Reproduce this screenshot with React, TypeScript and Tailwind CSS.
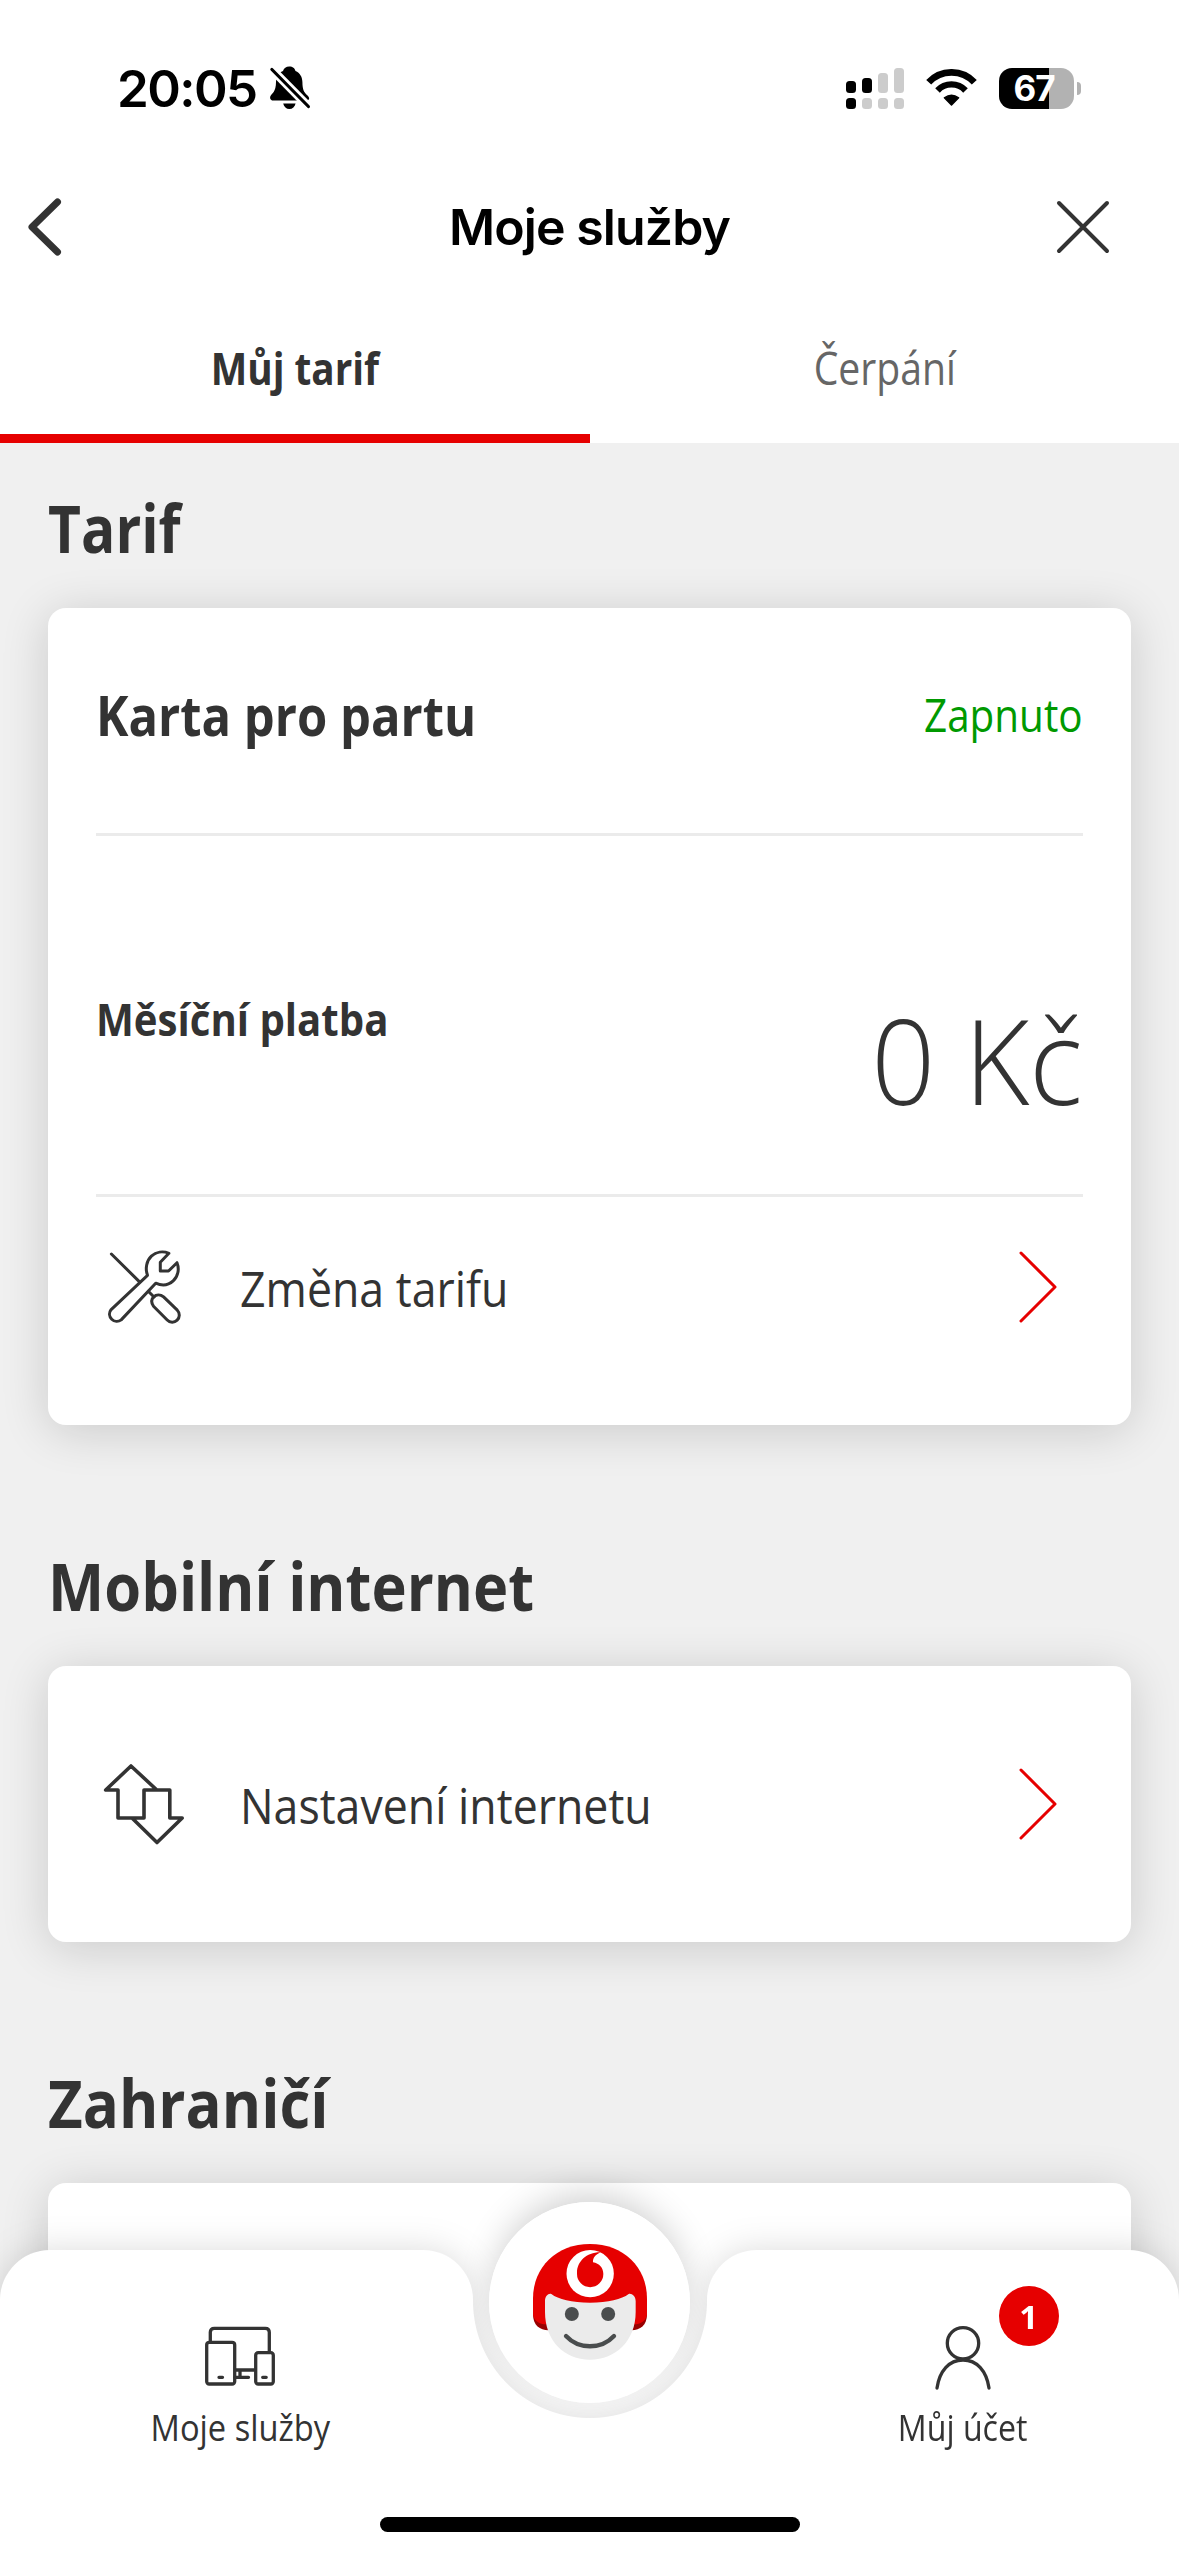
import { ReactNode } from 'react'
import { clsx } from 'clsx'

const signalBars = [
  { height: 'h-[12px]', top: true, bottom: true },
  { height: 'h-[15px]', top: true, bottom: false },
  { height: 'h-[20px]', top: false, bottom: false },
  { height: 'h-[25px]', top: false, bottom: false },
]

const BellOffIcon = () => (
  <svg width="42" height="44" viewBox="0 0 42 44" fill="none">
    <path
      d="M20.2.5C24 .5 25.5 2 26.5 5C31 7 33.4 11 33.4 16C33.5 24 35 26 38 29C40 31 40.5 32 40 33C39.5 34.3 38.5 34.5 37 34.5H4C1.5 34.5.5 32 1.5 30C3 27 7 26 7 16C7 11 9.5 7 14 5C15 2 17 .5 20.2.5Z"
      fill="black"
    />
    <path d="M14.2 37.5H26.6C25.8 41 23.5 43 20.4 43S15 41 14.2 37.5Z" fill="black" />
    <path d="M-1 -.5L43.3 44.4" stroke="white" strokeWidth="8.5" />
    <path d="M2.9 3.5L39.4 40.5" stroke="black" strokeWidth="3.2" strokeLinecap="round" />
  </svg>
)

const WifiIcon = () => (
  <svg width="51" height="38" viewBox="0 0 51 38" fill="none" stroke="black">
    <path d="M2.7 13.3A31.2 31.2 0 0 1 48.3 13.3" strokeWidth="6.8" />
    <path d="M11.5 21.5A19.2 19.2 0 0 1 39.5 21.5" strokeWidth="6.3" />
    <path
      d="M25.5 36L18.4 28.8Q25.5 23.8 32.6 28.8Z"
      fill="black"
      strokeWidth="1.5"
      strokeLinejoin="round"
    />
  </svg>
)

const ToolsIcon = () => (
  <svg width="96" height="96" viewBox="0 0 96 96" fill="none" stroke="#333" strokeWidth="3" strokeLinecap="round" strokeLinejoin="round">
    <path d="M15.4 15L43.3 42.6M52.8 52.7L58 58" />
    <path d="M72.9 14.3L64.3 23.2V32H72.5L81 23.7C83.6 30 82 37.5 77.2 41.9C72.4 46.3 65.6 46.8 59.7 44.2L25.2 80.9A7.3 7.3 0 0 1 14.9 70.8L51.5 36.3C49 29.5 50.5 21.8 55.4 17.2C60.2 12.8 67 11.8 72.9 14.3Z" />
    <path d="M67.6 57.9L81.3 71.2A7 7 0 0 1 71.2 81L57.5 67.3C55 63.5 55 60.5 57.7 57.9C60.3 55.2 64.5 55.2 67.6 57.9Z" />
  </svg>
)

const DataArrowsIcon = () => (
  <svg width="96" height="96" viewBox="0 0 96 96" fill="none" stroke="#333" strokeWidth="3.6" strokeLinejoin="round">
    <path d="M60.3 33.5L35 10L9.7 34H22V62H48V34H73.8V62H86.2L61 86.5L36.5 62.5" />
  </svg>
)

const ArrowRight = () => (
  <svg width="96" height="96" viewBox="0 0 96 96" fill="none" stroke="#e60000" strokeWidth="3" strokeLinecap="round" strokeLinejoin="round">
    <path d="M34 14L68 48L34 82" />
  </svg>
)

const DevicesIcon = () => (
  <svg width="72" height="72" viewBox="0 0 72 72" fill="none" stroke="#333" strokeWidth="3.3" strokeLinecap="round">
    <path d="M6.3 21V12.3Q6.3 8.3 10.3 8.3H61.3Q65.3 8.3 65.3 12.3V31.7M32 50H51M36 50V57.3M31 57.3H44.5" />
    <rect x="2.7" y="22.3" width="28" height="41.7" rx="2.5" />
    <rect x="51.7" y="32.7" width="17.6" height="31.3" rx="2.5" />
    <path d="M15 57.3H18.5M58.7 57.3H62.2" />
  </svg>
)

const UserIcon = () => (
  <svg width="72" height="72" viewBox="0 0 72 72" fill="none" stroke="#333" strokeWidth="3.3" strokeLinecap="round">
    <circle cx="36" cy="23.3" r="15.7" />
    <path d="M10 68C12.5 51 22 40 36 40S59.5 51 62 68" />
  </svg>
)

// Assistant face with the red helmet
const Mascot = () => (
  <svg width="114" height="116" viewBox="279 251 342 348" fill="none">
    <path d="M279 462C279 495 300 510 325 510H575C600 510 621 495 621 462Z" fill="#990000" />
    <path
      d="M279 464V415C279 320 350 251 450 251S621 320 621 415V464C616 483 602 492 582 492H318C298 492 284 483 279 464Z"
      fill="#e60000"
    />
    <path
      d="M315 422C315 408 325 398 334 401C355 417 395 427 450 427S545 417 566 401C575 398 587 408 587 422V455C587 540 528 598 450 598S315 540 315 455Z"
      fill="#ebebeb"
    />
    <circle cx="450.5" cy="340" r="71" fill="white" />
    <path
      d="M411 337C411 304 440 275 482 276C466 283 458 293 459 306C478 309 490 323 490 341A39.5 39.5 0 0 1 411 341Z"
      fill="#e60000"
    />
    <circle cx="395.5" cy="461" r="21" fill="#4a4d4e" />
    <circle cx="504.5" cy="461" r="21" fill="#4a4d4e" />
    <path d="M378 527C416 568 484 568 522 527" stroke="#4a4d4e" strokeWidth="13" strokeLinecap="round" />
  </svg>
)

const StatusBar = () => (
  <div className="flex h-[153px] items-center justify-between pt-[23px] pr-[98px] pl-[117px] font-['Inter',sans-serif]">
    <div className="flex items-center">
      <span className="w-[152px] text-[51px] leading-none font-semibold tracking-[-1.6px]">20:05</span>
      <BellOffIcon />
    </div>
    <div className="flex items-center gap-[22px]">
      <div className="flex items-end gap-[6px]">
        {signalBars.map((bar) => (
          <div key={bar.height} className="flex flex-col gap-[5px]">
            <div className={clsx('w-[10px] rounded-[3.5px]', bar.height, bar.top ? 'bg-black' : 'bg-[#ccc]')} />
            <div className={clsx('h-[11px] w-[10px] rounded-[3.5px]', bar.bottom ? 'bg-black' : 'bg-[#ccc]')} />
          </div>
        ))}
      </div>
      <WifiIcon />
      <div className="flex items-center gap-[3px]">
        <div className="flex h-[41px] w-[75px] items-center justify-center rounded-[13px] bg-[linear-gradient(90deg,#000_67%,#b2b2b2_67%)] pr-[5px] text-[35px] leading-none font-bold tracking-[-1px] text-white">
          67
        </div>
        <div className="h-[13px] w-[4px] rounded-r-full bg-[#b2b2b2]" />
      </div>
    </div>
  </div>
)

const Header = () => (
  <header className="flex h-[148px] items-center justify-between pr-[68px] pl-[26px]">
    <button className="w-[56px]">
      <svg width="37" height="60" viewBox="0 0 37 60" fill="none" stroke="#333" strokeWidth="7" strokeLinecap="round" strokeLinejoin="round">
        <path d="M31.5 5L6 30L31.5 55" />
      </svg>
    </button>
    <h1 className="pl-[42px] font-['Inter',sans-serif] text-[50px] leading-none font-semibold tracking-[-0.9px]">
      Moje služby
    </h1>
    <button>
      <svg width="56" height="56" viewBox="0 0 56 56" fill="none" stroke="#333" strokeWidth="4" strokeLinecap="round">
        <path d="M4 4L52 52M52 4L4 52" />
      </svg>
    </button>
  </header>
)

const Tabs = () => (
  <div className="grid h-[142px] grid-cols-2 text-[45px] leading-[60px]">
    <button className="border-b-[9px] border-[#e60000] font-bold">
      <span className="inline-block scale-x-[0.86]">Můj tarif</span>
    </button>
    <button className="border-b-[9px] border-white text-[#666]">
      <span className="inline-block scale-x-[0.87]">Čerpání</span>
    </button>
  </div>
)

type SectionProps = {
  title: string
  titleClassName?: string
  children?: ReactNode
}

const Section = ({ title, titleClassName = 'scale-x-[0.89]', children }: SectionProps) => (
  <section>
    <h2 className={clsx('mb-[41px] origin-left text-[67px] leading-[80px] font-bold', titleClassName)}>{title}</h2>
    <div className="rounded-[18px] bg-white px-[48px] shadow-[0_6px_48px_rgba(0,0,0,0.16)]">{children}</div>
  </section>
)

type LinkRowProps = {
  icon: ReactNode
  label: string
}

const LinkRow = ({ icon, label }: LinkRowProps) => (
  <div className="flex h-[180px] items-center">
    {icon}
    <div className="grow pt-px pl-[48px] text-[50px] leading-[60px]">
      <span className="inline-block origin-left scale-x-[0.893]">{label}</span>
    </div>
    <ArrowRight />
  </div>
)

const BottomNav = () => (
  <div className="absolute inset-x-0 bottom-0 h-[306px]">
    {/* glow of the round button, kept under the bar */}
    <div className="absolute top-[-48px] left-[489px] size-[201px] rounded-full shadow-[0_-12px_36px_-6px_rgba(0,0,0,0.2)]" />
    <nav className="relative flex h-full text-[36.5px] leading-[48px] drop-shadow-[0_0_17px_rgba(0,0,0,0.14)]">
      <div className="flex w-[472.5px] flex-col items-center gap-[11px] rounded-t-[50px] bg-white pt-[70px] pl-[8px]">
        <DevicesIcon />
        <span className="scale-x-[0.895]">Moje služby</span>
      </div>
      <div className="mt-[51px] w-[234px] bg-[radial-gradient(circle_at_50%_0,transparent_116.5px,#fff_117.5px)]" />
      <div className="flex w-[472.5px] flex-col items-center gap-[11px] rounded-t-[50px] bg-white pt-[70px] pl-[40px]">
        <div className="relative">
          <UserIcon />
          <span className="absolute top-[-34px] left-[72px] flex size-[60px] items-center justify-center rounded-full bg-[#e60000] text-[33px] leading-none font-bold text-white">
            1
          </span>
        </div>
        <span className="scale-x-[0.88]">Můj účet</span>
      </div>
    </nav>
    <button className="absolute top-[-48px] left-[489px] flex size-[201px] items-center justify-center rounded-full bg-white pb-[2px]">
      <Mascot />
    </button>
    <div className="absolute bottom-[24px] left-[380px] h-[15px] w-[420px] rounded-full bg-black" />
  </div>
)

export default function App() {
  return (
    <div className="relative h-[2556px] w-[1179px] overflow-hidden bg-white font-['Open_Sans',sans-serif] text-[#333]">
      <div className="text-black">
        <StatusBar />
        <Header />
      </div>
      <Tabs />
      <main className="flex h-[2113px] flex-col gap-[120px] overflow-hidden bg-[#f0f0f0] px-[48px] pt-[44px]">
        <Section title="Tarif" titleClassName="scale-x-[0.85]">
          <div className="flex h-[228px] items-center justify-between border-b-[3px] border-[#ebebeb] pb-[14px]">
            <span className="origin-left scale-x-[0.874] text-[56px] font-bold">Karta pro partu</span>
            <span className="origin-right scale-x-[0.898] pt-[2px] text-[45px] text-[#009900]">Zapnuto</span>
          </div>
          <div className="flex h-[361px] items-start justify-between border-b-[3px] border-[#ebebeb] pt-[153px]">
            <span className="origin-left scale-x-[0.892] text-[45px] leading-[60px] font-bold">Měsíční platba</span>
            <span className="origin-right scale-x-[0.95] text-[118px] leading-[142px] font-light">0 Kč</span>
          </div>
          <div className="h-[228px]">
            <LinkRow icon={<ToolsIcon />} label="Změna tarifu" />
          </div>
        </Section>
        <Section title="Mobilní internet">
          <div className="py-[48px]">
            <LinkRow icon={<DataArrowsIcon />} label="Nastavení internetu" />
          </div>
        </Section>
        <Section title="Zahraničí" titleClassName="scale-x-[0.895]">
          <div className="h-[276px]" />
        </Section>
      </main>
      <BottomNav />
    </div>
  )
}
